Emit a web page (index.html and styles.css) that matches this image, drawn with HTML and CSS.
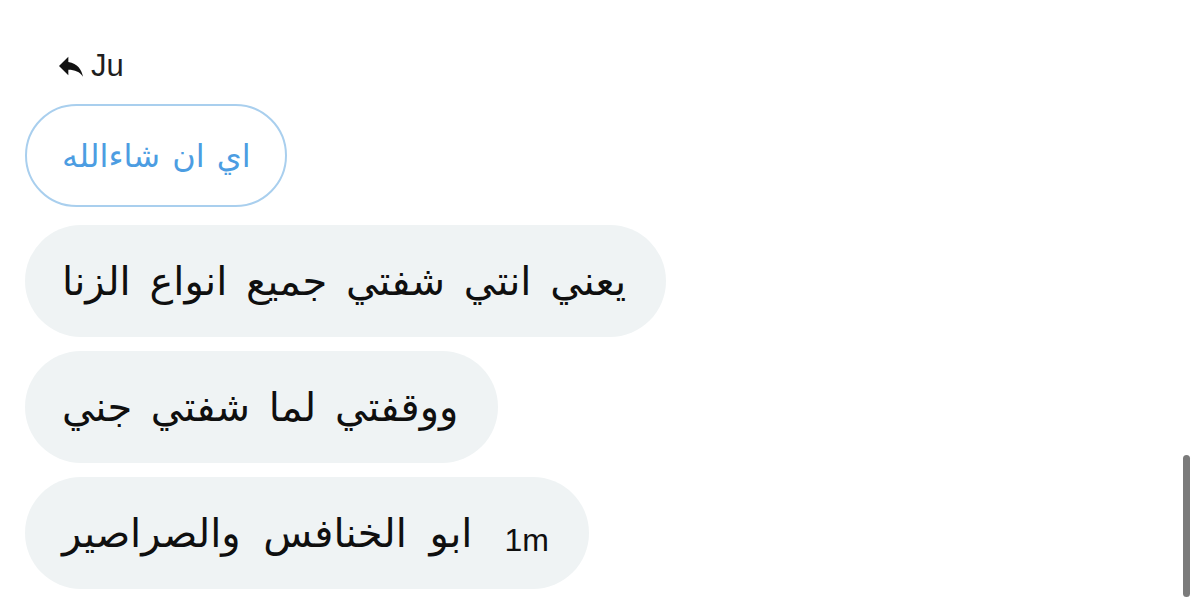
FILE: index.html
```html
<!DOCTYPE html>
<html lang="en">
<head>
  <meta charset="UTF-8">
  <title>Messages</title>
  <link rel="stylesheet" href="styles.css">
</head>
<body>
  <div class="thread">
    <div class="reply-to">
      <svg class="reply-icon" viewBox="0 0 24 24"><path d="M10 9V5l-7 7 7 7v-4.1c5 0 8.5 1.6 11 5.1-1-5-4-10-11-11z"/></svg>
      <span>Ju</span>
    </div>

    <div class="bubble quoted" dir="rtl">اي ان شاءالله</div>
    <div class="bubble" dir="rtl">يعني انتي شفتي جميع انواع الزنا</div>
    <div class="bubble" dir="rtl">ووقفتي لما شفتي جني</div>
    <div class="bubble last" dir="rtl">
      <span class="time" dir="ltr">1m</span>
      <span>ابو الخنافس والصراصير</span>
    </div>
  </div>
  <div class="scrollbar"></div>
</body>
</html>
```

FILE: styles.css
```css
body {
  margin: 0;
  background: #fff;
  font-family: "DejaVu Sans", sans-serif;
  height: 606px;
  overflow: hidden;
}

.thread {
  display: flex;
  flex-direction: column;
  align-items: flex-start;
  gap: 14px;
  padding: 48px 0 0 25px;
}

.reply-to {
  display: flex;
  align-items: center;
  gap: 4px;
  margin-left: 30px;
  margin-bottom: 6px;
  font-family: "Liberation Sans", sans-serif;
  font-size: 31px;
  color: #1f1f1f;
}

.reply-icon {
  width: 32px;
  height: 32px;
  fill: #111;
}

.bubble {
  display: inline-flex;
  align-items: center;
  gap: 23px;
  box-sizing: border-box;
  height: 112px;
  padding: 0 40px 0 37px;
  border-radius: 56px;
  background: #eff3f4;
  color: #0f0f0f;
  font-size: 40px;
  word-spacing: 6px;
}

.bubble.last {
  gap: 32px;
  word-spacing: 10px;
}

.bubble.quoted {
  height: 103px;
  margin-bottom: 4px;
  background: #fff;
  border: 2px solid #a9cfee;
  color: #4c9de2;
  font-size: 32px;
  word-spacing: 2px;
  padding: 0 34px 0 35px;
}

.time {
  font-family: "Liberation Sans", sans-serif;
  font-size: 32px;
  word-spacing: 0;
  margin-top: 14px;
}

.scrollbar {
  position: absolute;
  left: 1183px;
  top: 455px;
  width: 7px;
  height: 142px;
  border-radius: 4px;
  background: #7b7b7b;
}
```
